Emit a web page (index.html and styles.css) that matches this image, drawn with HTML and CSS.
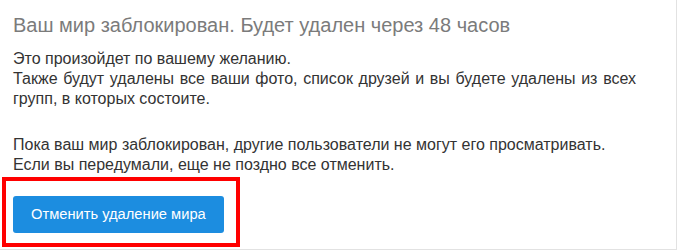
FILE: index.html
```html
<!DOCTYPE html>
<html lang="ru">
<head>
<meta charset="utf-8">
<title>Мир заблокирован</title>
<link rel="stylesheet" href="styles.css">
</head>
<body>
<div class="panel">
  <h3 class="panel-title">Ваш мир заблокирован. Будет удален через 48 часов</h3>
  <p class="text">Это произойдет по вашему желанию.<br>Также будут удалены все ваши фото, список друзей и вы будете удалены из всех групп, в которых состоите.</p>
  <p class="text text-second">Пока ваш мир заблокирован, другие пользователи не могут его просматривать.<br>Если вы передумали, еще не поздно все отменить.</p>
  <div class="highlight">
    <button class="btn-cancel" type="button">Отменить удаление мира</button>
  </div>
</div>
</body>
</html>
```

FILE: styles.css
```css
html, body {
  margin: 0;
  padding: 0;
  background: #ffffff;
}

body {
  font-family: "Liberation Sans", Arial, sans-serif;
  color: #333333;
}

.panel {
  box-sizing: border-box;
  width: 677px;
  height: 250px;
  padding: 13px 0 2px 13px;
  border-right: 1px solid #e2e2e2;
  border-bottom: 1px solid #e2e2e2;
  overflow: hidden;
}

.panel-title {
  margin: 0;
  font-size: 20px;
  line-height: 24px;
  font-weight: normal;
  color: #7b7b7b;
}

.text {
  width: 623px;
  margin: 12px 0 0;
  font-size: 16px;
  line-height: 20px;
  text-align: justify;
}

.text-second {
  margin-top: 26px;
}

.highlight {
  display: inline-block;
  margin: 2px 0 0 -11px;
  padding: 15px 12px 10px 7px;
  border: 4px solid #ff0000;
}

.btn-cancel {
  display: block;
  height: 37px;
  padding: 0 18px;
  border: 0;
  border-radius: 3px;
  background: #1c8de0;
  color: #ffffff;
  font-family: "Liberation Sans", Arial, sans-serif;
  font-size: 14.7px;
  line-height: 37px;
  cursor: pointer;
}
```
